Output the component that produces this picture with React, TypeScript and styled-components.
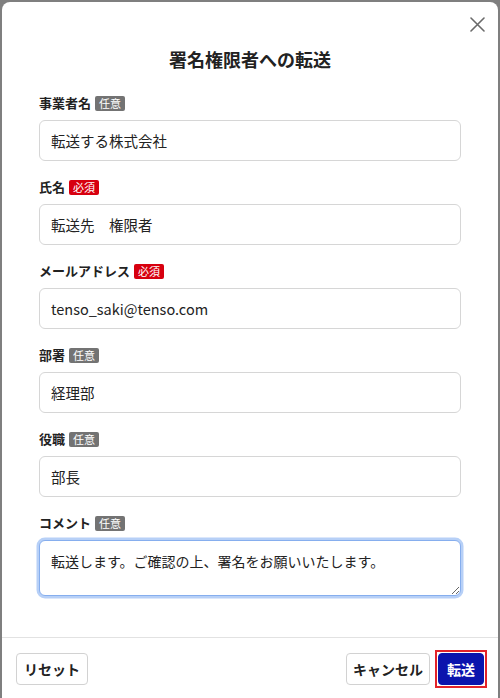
import React, { useEffect, useRef } from "react";
import styled, { createGlobalStyle } from "styled-components";

const GlobalStyle = createGlobalStyle`
  html, body {
    margin: 0;
    padding: 0;
    height: 698px;
    overflow: hidden;
    background: #7f7f7f;
  }
  * { box-sizing: border-box; }
  body {
    font-family: "Noto Sans CJK JP", "Noto Sans", sans-serif;
    color: #222;
  }
`;

const Page = styled.div`
  height: 698px;
  padding: 2px 2px 0 2px;
  background: #7f7f7f;
  overflow: hidden;
`;

const Modal = styled.div`
  position: relative;
  height: 706px;
  background: #fff;
  border-radius: 8px;
  display: flex;
  flex-direction: column;
`;

const CloseButton = styled.button`
  position: absolute;
  top: 15px;
  right: 13px;
  width: 15px;
  height: 15px;
  padding: 0;
  border: none;
  background: transparent;
  display: flex;
  align-items: center;
  justify-content: center;
  cursor: pointer;
`;

const Body = styled.div`
  padding: 44px 37px 0 37px;
  display: flex;
  flex-direction: column;
`;

const Title = styled.h2`
  margin: 0 0 22px 0;
  font-size: 18px;
  line-height: 26px;
  font-weight: 700;
  text-align: center;
  color: #222;
`;

const Form = styled.div`
  display: flex;
  flex-direction: column;
  gap: 17px;
`;

const Field = styled.div`
  display: flex;
  flex-direction: column;
  gap: 8px;
`;

const LabelRow = styled.div`
  display: flex;
  align-items: center;
  gap: 4px;
  height: 18px;
`;

const LabelText = styled.span`
  font-size: 13px;
  line-height: 18px;
  font-weight: 700;
  color: #222;
`;

const Badge = styled.span<{ $required?: boolean }>`
  display: inline-block;
  height: 15px;
  line-height: 15px;
  padding: 0 4px;
  font-size: 11px;
  font-weight: 400;
  color: #fff;
  border-radius: 2px;
  background: ${(p) => (p.$required ? "#d7000f" : "#737373")};
`;

const Input = styled.input`
  width: 100%;
  height: 41px;
  padding: 0 11px;
  border: 1px solid #d6d6d6;
  border-radius: 6px;
  font-family: inherit;
  font-size: 14.5px;
  color: #222;
  background: #fff;
  outline: none;
`;

const TextArea = styled.textarea`
  width: 100%;
  height: 56px;
  padding: 10px 11px 9px 11px;
  border: 1px solid #86aeee;
  border-radius: 6px;
  box-shadow: 0 0 0 2.5px #b7d0f7;
  font-family: inherit;
  font-size: 14px;
  line-height: 21px;
  color: #222;
  caret-color: #222;
  background: #fff;
  outline: none;
  resize: vertical;
  &:focus {
    outline: none;
  }
`;

const Divider = styled.div`
  margin-top: 41px;
  height: 1px;
  background: #e2e2e2;
`;

const Footer = styled.div`
  padding: 15px 14px 0 14px;
  display: flex;
  justify-content: space-between;
  align-items: center;
`;

const Actions = styled.div`
  display: flex;
  gap: 8px;
`;

const Button = styled.button<{ $primary?: boolean; $pad?: number }>`
  position: relative;
  height: 32px;
  padding: 0 ${(p) => p.$pad ?? 6}px;
  border-radius: 4px;
  font-family: inherit;
  font-size: 14px;
  font-weight: 700;
  cursor: pointer;
  outline: none;
  border: 1px solid ${(p) => (p.$primary ? "#0b14ad" : "#d2d2d2")};
  background: ${(p) => (p.$primary ? "#0b14ad" : "#fff")};
  color: ${(p) => (p.$primary ? "#fff" : "#222")};
  &::after {
    content: "";
    display: ${(p) => (p.$primary ? "block" : "none")};
    position: absolute;
    left: -4px;
    right: -4px;
    top: -4px;
    bottom: -4px;
    border: 2px solid #e3232a;
    pointer-events: none;
  }
`;

type FieldDef = { label: string; required: boolean; value: string };

const fields: FieldDef[] = [
  { label: "事業者名", required: false, value: "転送する株式会社" },
  { label: "氏名", required: true, value: "転送先　権限者" },
  { label: "メールアドレス", required: true, value: "tenso_saki@tenso.com" },
  { label: "部署", required: false, value: "経理部" },
  { label: "役職", required: false, value: "部長" },
];

const comment = "転送します。ご確認の上、署名をお願いいたします。";

export default function App() {
  const ref = useRef<HTMLTextAreaElement>(null);
  useEffect(() => {
    const el = ref.current;
    if (el) {
      el.focus();
      el.setSelectionRange(el.value.length, el.value.length);
    }
  }, []);

  return (
    <>
      <GlobalStyle />
      <Page>
        <Modal>
          <CloseButton aria-label="閉じる">
            <svg width="15" height="15" viewBox="0 0 15 15">
              <path
                d="M1 1 L14 14 M14 1 L1 14"
                stroke="#6a6a6a"
                strokeWidth="1.6"
                strokeLinecap="round"
              />
            </svg>
          </CloseButton>
          <Body>
            <Title>署名権限者への転送</Title>
            <Form>
              {fields.map((f) => (
                <Field key={f.label}>
                  <LabelRow>
                    <LabelText>{f.label}</LabelText>
                    <Badge $required={f.required}>{f.required ? "必須" : "任意"}</Badge>
                  </LabelRow>
                  <Input defaultValue={f.value} />
                </Field>
              ))}
              <Field>
                <LabelRow>
                  <LabelText>コメント</LabelText>
                  <Badge>任意</Badge>
                </LabelRow>
                <TextArea ref={ref} autoFocus defaultValue={comment} />
              </Field>
            </Form>
          </Body>
          <Divider />
          <Footer>
            <Button $pad={7}>リセット</Button>
            <Actions>
              <Button>キャンセル</Button>
              <Button $primary $pad={8}>転送</Button>
            </Actions>
          </Footer>
        </Modal>
      </Page>
    </>
  );
}
